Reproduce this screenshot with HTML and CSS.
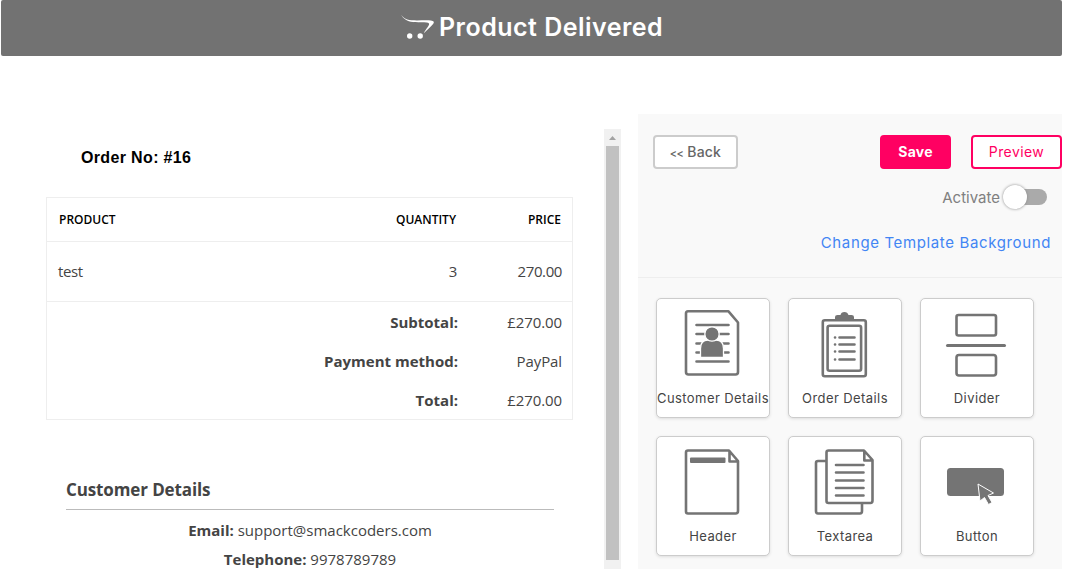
FILE: index.html
```html
<!DOCTYPE html>
<html lang="en">
<head>
<meta charset="utf-8">
<title>Product Delivered</title>
<link rel="stylesheet" href="styles.css">
</head>
<body>
<header class="banner">
  <svg class="cart" width="34" height="26" viewBox="0 0 34 26"><path d="M.3 0C3.500 4.800 8 5.400 16 5.400C25 5.400 31 4.800 32.800 6.800C33.400 8.600 29.500 12 22.800 18.200C25 13.500 29 9.700 28 8.400C26 6.900 19 8 12 7.100C6 6.300 2 3.600.3 0Z"/><circle cx="8.700" cy="21" r="2.700"/><circle cx="19.200" cy="21" r="2.700"/></svg>
  <h1 class="banner-title">Product Delivered</h1>
</header>
<main class="workspace">
  <section class="mail">
    <h2 class="order-no">Order No: #16</h2>
    <div class="order">
      <div class="row head"><span>PRODUCT</span><span>QUANTITY</span><span>PRICE</span></div>
      <div class="row item"><span>test</span><span>3</span><span>270.00</span></div>
      <div class="totals">
        <div class="row total"><b>Subtotal:</b><span>£270.00</span></div>
        <div class="row total"><b>Payment method:</b><span>PayPal</span></div>
        <div class="row total"><b>Total:</b><span>£270.00</span></div>
      </div>
    </div>
    <div class="customer">
      <h3 class="customer-title">Customer Details</h3>
      <p><b>Email:</b> support@smackcoders.com</p>
      <p><b>Telephone:</b> 9978789789</p>
    </div>
  </section>
  <div class="scrollbar"><svg width="17" height="17"><path d="M5 11h7L8.500 7z"/></svg><div class="thumb"></div></div>
  <aside class="panel">
    <div class="controls">
      <div class="buttons">
        <button class="btn back"><span class="chevrons">&lt;&lt;</span> Back</button>
        <button class="btn save">Save</button>
        <button class="btn preview">Preview</button>
      </div>
      <div class="activate"><span>Activate</span><span class="toggle"><span class="knob"></span></span></div>
      <a class="change">Change Template Background</a>
    </div>
    <div class="cards">
      <div class="card">
        <svg class="icon" width="112" height="90" viewBox="0 0 112 90">
          <path class="o" d="M31 12.300H71.500L81 23.500V73Q81 75.500 78.500 75.500H31.500Q29 75.500 29 73V14.500Q29 12.300 31 12.300Z"/>
          <path class="l" d="M39.500 26H71.500M39.500 35H71.500M39.500 44.500H71.500M39.500 53.500H71.500M39.500 62.500H71.500"/>
          <path class="person" d="M43.500 58.500V49.500Q43.500 41 51 41H59Q66.500 41 66.500 49.500V58.500Z"/><circle class="person" cx="55" cy="35" r="7.200"/>
        </svg><span class="label">Customer Details</span>
      </div>
      <div class="card">
        <svg class="icon" width="112" height="90" viewBox="0 0 112 90">
          <rect class="o" x="33.800" y="21.300" width="43" height="56" rx="2"/><rect class="o" x="38.600" y="26.800" width="33.500" height="45" rx="2"/>
          <path class="f" d="M46 20.500V18Q46 16 48.500 16H51.500Q52 13 55.500 13Q58.500 13 59.500 16H62.500Q65 16 65 18V20.500Z"/>
          <path class="l" d="M50.500 38.500H65.500M50.500 45.500H65.500M50.500 52.500H65.500M50.500 60.500H65.500M46 38.500h.1M46 45.500h.1M46 52.500h.1M46 60.500h.1"/>
        </svg><span class="label">Order Details</span>
      </div>
      <div class="card">
        <svg class="icon" width="112" height="90" viewBox="0 0 112 90">
          <rect class="o" x="35.500" y="16" width="39.500" height="20.500" rx="2"/><rect class="o" x="35.500" y="56" width="39.500" height="20.500" rx="2.500"/><path class="d" d="M26.500 46.500H83.500"/>
        </svg><span class="label">Divider</span>
      </div>
      <div class="card">
        <svg class="icon" width="112" height="90" viewBox="0 0 112 90">
          <path class="o" d="M31 13.500H72L81 24V74Q81 76.500 78.500 76.500H31Q29 76.500 29 74.500V15.500Q29 13.500 31 13.500ZM72.500 14V24.500H81"/>
          <rect class="f" x="33" y="20.500" width="35.500" height="5.500" rx="1"/>
        </svg><span class="label">Header</span>
      </div>
      <div class="card">
        <svg class="icon" width="112" height="90" viewBox="0 0 112 90">
          <path class="o" d="M37.500 24H29Q27 24 27 26V74Q27 76.500 29 76.500H71Q73 76.500 73 74V66.500M39.500 13.500H75L83.500 23V63.500Q83.500 66 81.500 66H39.500Q37.500 66 37.500 64V15.500Q37.500 13.500 39.500 13.500ZM75.300 14V23.500H83.500"/>
          <path class="l" d="M47 28H74.500M47 35.500H74.500M47 43.500H74.500M47 51H74.500M47 58.500H74.500"/>
        </svg><span class="label">Textarea</span>
      </div>
      <div class="card">
        <svg class="icon" width="112" height="90" viewBox="0 0 112 90">
          <rect class="f" x="26" y="31" width="57" height="28" rx="3.500"/><path class="cursor" d="M57 47L72.500 56L67 58.500L71 65.500L67.500 67.500L63.500 60.500L59 64Z"/>
        </svg><span class="label">Button</span>
      </div>
    </div>
  </aside>
</main>
</body>
</html>
```
FILE: styles.css
```css
* { box-sizing: border-box; }
html { overflow: hidden; background: #fff; }
body { margin: 0; height: 569px; overflow: hidden; font-family: "Open Sans", "Noto Sans", sans-serif; color: #444; }
h1, h2, h3, p { margin: 0; }
.banner { width: 1061px; height: 56px; margin-left: 1px; padding-top: 15px; display: flex; justify-content: center; gap: 4px; background: #727272; border-radius: 2px; }
.cart { fill: #fff; flex: none; }
.banner-title { width: 223px; height: 24px; white-space: nowrap; color: #fff; font: 600 25px/24px Inter, sans-serif; letter-spacing: .48px; }
.workspace { display: flex; align-items: flex-start; height: 513px; width: 1062px; }
.mail { width: 604px; padding: 92px 31px 0 46px; font-size: 15px; }
.order-no { padding-left: 35px; height: 49px; font: bold 16px/20px "Liberation Sans", sans-serif; letter-spacing: .35px; color: #000; }
.order { border: 1px solid #eee; height: 223px; }
.row { display: grid; grid-template-columns: 1fr 160px 105px; text-align: right; align-items: center; padding: 0 10px; }
.row > :first-child { text-align: left; }
.head { height: 44px; padding: 0 11px 0 12px; border-bottom: 1px solid #eee; color: #000; font-weight: 600; font-size: 12px; }
.item { height: 60px; padding-bottom: 2px; border-bottom: 1px solid #eee; letter-spacing: -.4px; }
.item > :first-child { padding-left: 1px; }
.totals { padding-top: 0; }
.total { height: 39px; padding-bottom: 0; grid-template-columns: 1fr 104px; }
.total > b:first-child { text-align: right; }
.total span { letter-spacing: -.1px; }
.customer { margin: 57px 19px 0 20px; text-align: center; }
.customer-title { height: 33px; margin-bottom: 6px; border-bottom: 1px solid #bbb; text-align: left; font-size: 17px; line-height: 25px; letter-spacing: -.12px; }
.customer p { height: 29px; line-height: 29px; white-space: nowrap; }
.scrollbar { width: 17px; height: 440px; margin: 73px 17px 0 0; background: #f1f1f1; flex: none; }
.scrollbar svg { display: block; fill: #a3a3a3; }
.thumb { width: 13px; height: 414px; margin: 0 2px; background: #c1c1c1; }
.panel { width: 424px; height: 455px; margin-top: 58px; background: #f9f9f9; font-family: Inter, sans-serif; }
.controls { height: 164px; padding: 21px 0 0 15px; border-bottom: 1px solid #eee; }
.buttons { display: flex; }
.btn { height: 34px; padding: 0 0 1px; border: 2px solid #ff0062; border-radius: 4px; background: #fff; color: #ff0062; font: 400 14px Inter, sans-serif; white-space: nowrap; }
.back { width: 85px; border-color: #ccc; color: #666; font-weight: 500; letter-spacing: .2px; }
.chevrons { font-size: 11px; letter-spacing: -.6px; }
.save { width: 71px; margin-left: 142px; background: #ff0062; color: #fff; font-weight: 700; letter-spacing: .2px; }
.preview { width: 91px; margin-left: 20px; letter-spacing: .4px; }
.activate { height: 24px; margin: 16px 15px 0 0; display: flex; justify-content: flex-end; align-items: center; gap: 5px; color: #808080; font-size: 15px; }
.toggle { width: 42px; height: 16px; border-radius: 8px; background: #aaa; }
.knob { display: block; width: 24px; height: 24px; margin: -4px 0 0 -2px; border-radius: 50%; background: #fff; box-shadow: 0 0 3px #888; }
.change { display: block; height: 24px; margin: 22px 11px 0 0; text-align: right; line-height: 24px; font-size: 15px; letter-spacing: .63px; color: #4285f4; }
.cards { display: grid; grid-template-columns: repeat(3, 114px); gap: 18px; padding: 20px 0 0 18px; }
.card { height: 120px; display: flex; flex-direction: column; align-items: center; background: #fff; border: 1px solid #ccc; border-radius: 5px; box-shadow: 0 1px 3px #ddd; }
.icon { display: block; flex: none; }
.label { height: 20px; line-height: 18px; font-size: 13px; letter-spacing: .42px; white-space: nowrap; color: #444; }
.o { fill: none; stroke: #747474; stroke-width: 2.6; stroke-linejoin: round; }
.l { fill: none; stroke: #747474; stroke-width: 2.6; stroke-linecap: round; }
.d { stroke: #747474; stroke-width: 3; stroke-linecap: round; }
.f { fill: #747474; }
.person { fill: #747474; stroke: #fff; stroke-width: 1.3; }
.cursor { fill: #747474; stroke: #fff; stroke-width: 1; }
```
